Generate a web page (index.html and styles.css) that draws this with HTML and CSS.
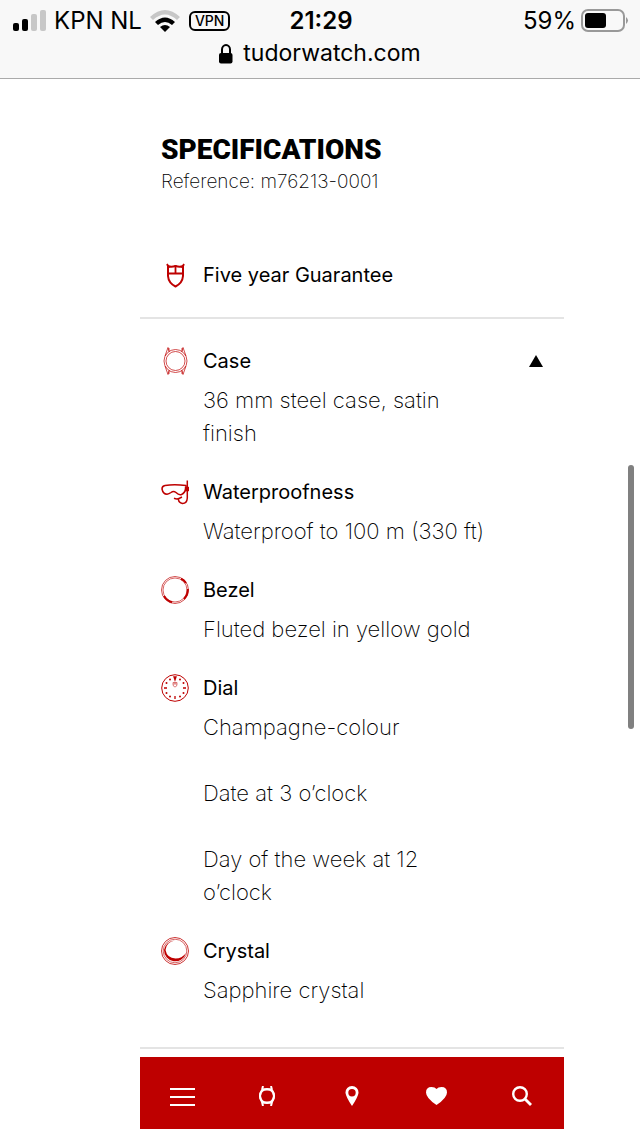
FILE: index.html
```html
<!DOCTYPE html>
<html lang="en">

<head>
    <meta charset="UTF-8">
    <meta name="viewport" content="width=device-width, initial-scale=1.0">
    <title>Specifications</title>
    <link rel="stylesheet" href="styles.css">
</head>

<body>
    <header class="browser">
        <div class="status">
            <div class="status-left">
                <svg class="signal" width="34" height="24" viewBox="0 0 34 24">
                    <rect x="0" y="14" width="6" height="8" rx="2" />
                    <rect x="9" y="10" width="6" height="12" rx="2" />
                    <rect x="18" y="5" width="6" height="17" rx="2" fill="#c7c7c7" />
                    <rect x="27" y="1" width="6" height="21" rx="2" fill="#c7c7c7" />
                </svg>
                <span class="carrier">KPN NL</span>
                <svg class="wifi" width="30" height="24" viewBox="0 0 30 24">
                    <path d="M0 8Q15 -6 30 8L27 11Q15 0 3 11Z" fill="#c7c7c7" />
                    <path d="M5 13Q15 4 25 13L22 16Q15 10 8 16Z" />
                    <path d="M10 18Q15 14 20 18L15 23Z" />
                </svg>
                <span class="vpn">VPN</span>
            </div>
            <time class="time">21:29</time>
            <div class="status-right">
                <span>59%</span>
                <svg width="48" height="24" viewBox="0 0 48 24">
                    <rect x="1" y="1" width="42" height="21" rx="6" fill="none" stroke="#999" stroke-width="2" />
                    <rect x="4" y="4" width="21" height="15" rx="3" />
                    <path d="M45 8Q49 11.500 45 15Z" fill="#999" />
                </svg>
            </div>
        </div>
        <div class="address">
            <svg width="14" height="20" viewBox="0 0 14 20">
                <path d="M3 10V5.500a4 4.500 0 0 1 8 0V10" fill="none" stroke="#000" stroke-width="2" />
                <rect x="0" y="9" width="13.500" height="10.500" rx="2" />
            </svg>
            <span>tudorwatch.com</span>
        </div>
    </header>

    <div class="page">
        <main>
            <div class="intro">
                <h1 class="title">SPECIFICATIONS</h1>
                <p class="reference">Reference: m76213-0001</p>
            </div>

            <section class="group guarantee">
                <div class="spec">
                    <svg class="icon" viewBox="0 0 28 28">
                        <path d="M7 5q3 1.500 7.500 0q4.500 1.500 7.500 0v10q-.500 7-7.500 10.500Q7.500 22 7 15Z" fill="none" stroke="#be0000" stroke-width="2" />
                        <path d="M7 12.500h15M14.500 4v8.500M6 3l2 4M23 3l-2 4" fill="none" stroke="#be0000" stroke-width="1.800" />
                    </svg>
                    <h2>Five year Guarantee</h2>
                </div>
            </section>

            <section class="group">
                <div class="spec">
                    <svg class="icon" viewBox="0 0 28 28" fill="none" stroke="#be0000" stroke-width="0.700">
                        <circle cx="14.500" cy="14" r="11.500" />
                        <circle cx="14.500" cy="14" r="9.500" />
                        <path d="M4 9L7 .500L8 4M25 9L22 .500L21 4M4 19L7 27.500L8 24M25 19L22 27.500L21 24M8 1v4M21 1v4M8 23v4M21 23v4" />
                    </svg>
                    <h2><button class="toggle" aria-expanded="true">Case
                        <svg width="14" height="12" viewBox="0 0 14 12"><path d="M7 0L14 12H0Z" /></svg>
                    </button></h2>
                    <p>36 mm steel case, satin finish</p>
                </div>
                <div class="spec">
                    <svg class="icon" viewBox="0 0 28 28" fill="none" stroke="#be0000" stroke-width="1.500" stroke-linejoin="round">
                        <path d="M25 7.500Q13 6 4 7.500Q1 8 1 11Q2 16 6 16.300Q8 16 10 14.500Q12.500 12.500 15 14.500Q18 17.500 20.500 16.500Q24 15 25 10Z" />
                        <path d="M26.300 2.500V20Q26 25.500 21.500 25.500Q17.500 24.500 17.500 21.500M13 20.300Q16 21.500 18 20.500T21 19" />
                        <rect x="24.500" y="9.500" width="3" height="3" fill="#be0000" />
                    </svg>
                    <h2>Waterproofness</h2>
                    <p>Waterproof to 100 m (330 ft)</p>
                </div>
                <div class="spec">
                    <svg class="icon" viewBox="0 0 28 28" fill="none" stroke="#be0000">
                        <circle cx="14" cy="14" r="13.500" stroke-width="0.700" />
                        <circle cx="14" cy="14" r="12" stroke-width="0.600" />
                        <path d="M20 2.800Q23 4 25 7M26.800 13Q27 19 23 23M3 20Q6 25 11 26.300" stroke-width="2" />
                    </svg>
                    <h2>Bezel</h2>
                    <p>Fluted bezel in yellow gold</p>
                </div>
                <div class="spec">
                    <svg class="icon" viewBox="0 0 28 28" fill="none" stroke="#be0000">
                        <circle cx="14" cy="14" r="13.300" stroke-width="1" />
                        <path d="M13 3h2l-1 3ZM3 14h3M22 14h3M14 22v3" stroke-width="1.300" />
                        <path d="M12 8.500h4v2q0 2-2 2.500q-2-.500-2-2.500ZM12 10h4M14 8.500V10" stroke-width="0.500" />
                        <g fill="#be0000" stroke="none">
                            <circle cx="19" cy="5.500" r="1" /><circle cx="22.500" cy="9" r="1" />
                            <circle cx="22.500" cy="19" r="1" /><circle cx="19" cy="22.500" r="1" />
                            <circle cx="9" cy="22.500" r="1" /><circle cx="5.500" cy="19" r="1" />
                            <circle cx="5.500" cy="9" r="1" /><circle cx="9" cy="5.500" r="1" />
                        </g>
                    </svg>
                    <h2>Dial</h2>
                    <p>Champagne-colour<br><br>Date at 3 o’clock<br><br>Day of the week at 12 o’clock</p>
                </div>
                <div class="spec">
                    <svg class="icon" viewBox="0 0 28 28" fill="none" stroke="#be0000">
                        <circle cx="14" cy="14" r="13.500" stroke-width="0.800" />
                        <circle cx="14" cy="14" r="11.800" stroke-width="0.600" />
                        <path d="M3 13A11.200 11.200 0 0 0 25 16Q21 21.500 14.500 21.500Q6 21 4.500 13A10.500 10 0 0 1 14 3.500A11 11 0 0 0 3 13Z" fill="#be0000" stroke="none" />
                    </svg>
                    <h2>Crystal</h2>
                    <p>Sapphire crystal</p>
                </div>
            </section>
        </main>

        <nav class="tabs">
            <button aria-label="Menu">
                <svg width="26" height="20" viewBox="0 0 26 20"><path d="M1 3h25M1 11h25M1 19h25" stroke="#fff" stroke-width="2" /></svg>
            </button>
            <button aria-label="Watches">
                <svg width="18" height="20" viewBox="0 0 18 20" fill="none" stroke="#fff" stroke-width="2">
                    <circle cx="9" cy="10" r="7" />
                    <path d="M5 0L4 4Q0 10 4 16L5 20M13 0L14 4Q18 10 14 16L13 20M4 3.500h10M4 16.500h10" />
                </svg>
            </button>
            <button aria-label="Stores">
                <svg width="14" height="20" viewBox="0 0 14 20"><path fill="#fff" fill-rule="evenodd" d="M7 0a6.500 6.500 0 0 1 6.500 7Q13 11 7 20Q1 11 .500 7A6.500 6.500 0 0 1 7 0ZM7 3a3.700 3.700 0 1 0 0 7.400A3.700 3.700 0 1 0 7 3Z" /></svg>
            </button>
            <button aria-label="Favourites">
                <svg width="21" height="18" viewBox="0 0 21 18"><path fill="#fff" d="M10.500 18Q0 11 0 5.500Q0 0 5.500 0Q9 0 10.500 2Q12 0 15.500 0Q21 0 21 5.500Q21 11 10.500 18Z" /></svg>
            </button>
            <button aria-label="Search">
                <svg width="20" height="20" viewBox="0 0 20 20" fill="none" stroke="#fff" stroke-width="2.400">
                    <circle cx="8" cy="8" r="6.800" />
                    <path d="M13 13L19 19" stroke-width="2.800" />
                </svg>
            </button>
        </nav>
    </div>
    <div class="scrollbar"></div>
</body>

</html>
```
FILE: styles.css
```css
* {
    box-sizing: border-box;
}

body {
    position: relative;
    margin: 0;
    background-color: #fff;
    color: #000;
    font-family: Inter, "Liberation Sans", sans-serif;
}

h1,
h2,
p {
    margin: 0;
}

svg {
    display: block;
    flex-shrink: 0;
}

button {
    border: none;
    padding: 0;
    background: none;
    color: inherit;
    font: inherit;
    cursor: pointer;
}

.browser {
    padding-top: 4px;
    padding-bottom: 8px;
    background-color: #f8f8f8;
    border-bottom: 1px solid #aaa;
    font-size: 24px;
    line-height: 33px;
}

.status {
    display: grid;
    grid-template-columns: 1fr auto 1fr;
    align-items: center;
    padding: 0 11px 0 13px;
}

.status-left,
.status-right {
    display: flex;
    align-items: center;
}

.carrier {
    margin: 0 8px 0 7px;
}

.vpn {
    margin-left: 9px;
    padding: 0 4px;
    border: 2px solid #000;
    border-radius: 6px;
    font-size: 14px;
    font-weight: 500;
    line-height: 16px;
}

.time {
    font-weight: 600;
}

.status-right {
    justify-content: flex-end;
    gap: 5px;
}

.address {
    display: flex;
    align-items: center;
    justify-content: center;
    gap: 10px;
    font-size: 23px;
}

.page {
    margin: 0 76px 7px 140px;
}

.intro {
    padding: 53px 21px 63px;
}

.title {
    font-family: Roboto, sans-serif;
    font-size: 28px;
    font-weight: 900;
    line-height: 35px;
}

.reference {
    font-size: 19px;
    font-weight: 200;
    line-height: 29px;
}

.group {
    display: grid;
    gap: 26px;
    padding: 26px 21px 40px;
    border-bottom: 2px solid #e4e4e4;
}

.guarantee {
    padding-top: 0;
    padding-bottom: 26px;
}

.spec {
    display: grid;
    grid-template-columns: 28px 1fr;
    gap: 7px 14px;
}

.spec h2 {
    font-size: 20px;
    font-weight: 400;
    line-height: 32px;
}

.spec p {
    grid-column: 2;
    max-width: 285px;
    font-size: 22px;
    font-weight: 200;
    line-height: 33px;
}

.icon {
    width: 28px;
    height: 28px;
    align-self: center;
}

.toggle {
    display: flex;
    align-items: center;
    justify-content: space-between;
    width: 100%;
}

.tabs {
    display: grid;
    grid-template-columns: repeat(5, 1fr);
    margin-top: 8px;
    height: 72px;
    padding-top: 6px;
    background-color: #be0000;
}

.tabs button {
    display: flex;
    align-items: center;
    justify-content: center;
}

/* page scroll indicator */
.scrollbar {
    position: absolute;
    top: 465px;
    right: 6px;
    width: 6px;
    height: 264px;
    border-radius: 3px;
    background-color: #808080;
}
```
